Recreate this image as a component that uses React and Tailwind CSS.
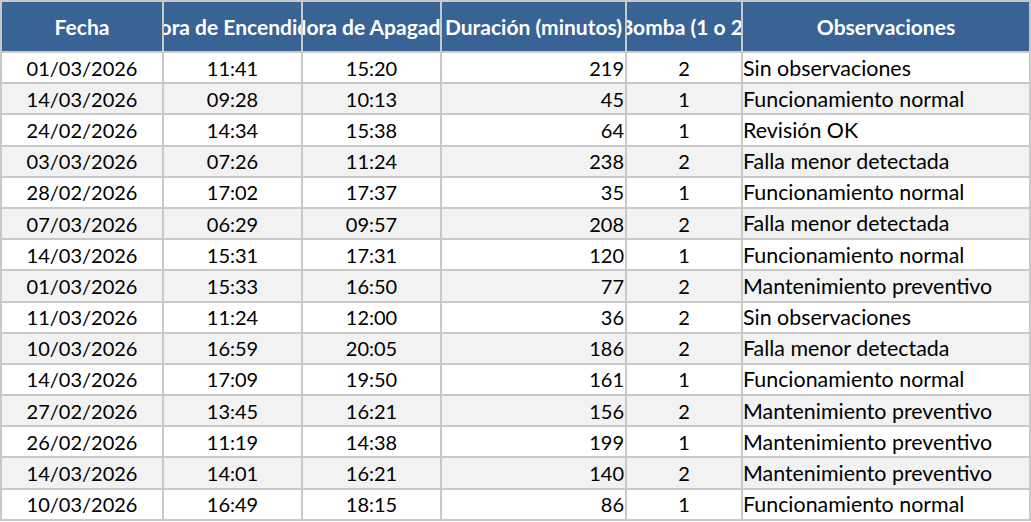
const headers = [
  'Fecha',
  'Hora de Encendido',
  'Hora de Apagado',
  'Duración (minutos)',
  'Bomba (1 o 2)',
  'Observaciones',
]

const rows = [
  ['01/03/2026', '11:41', '15:20', '219', '2', 'Sin observaciones'],
  ['14/03/2026', '09:28', '10:13', '45', '1', 'Funcionamiento normal'],
  ['24/02/2026', '14:34', '15:38', '64', '1', 'Revisión OK'],
  ['03/03/2026', '07:26', '11:24', '238', '2', 'Falla menor detectada'],
  ['28/02/2026', '17:02', '17:37', '35', '1', 'Funcionamiento normal'],
  ['07/03/2026', '06:29', '09:57', '208', '2', 'Falla menor detectada'],
  ['14/03/2026', '15:31', '17:31', '120', '1', 'Funcionamiento normal'],
  ['01/03/2026', '15:33', '16:50', '77', '2', 'Mantenimiento preventivo'],
  ['11/03/2026', '11:24', '12:00', '36', '2', 'Sin observaciones'],
  ['10/03/2026', '16:59', '20:05', '186', '2', 'Falla menor detectada'],
  ['14/03/2026', '17:09', '19:50', '161', '1', 'Funcionamiento normal'],
  ['27/02/2026', '13:45', '16:21', '156', '2', 'Mantenimiento preventivo'],
  ['26/02/2026', '11:19', '14:38', '199', '1', 'Mantenimiento preventivo'],
  ['14/03/2026', '14:01', '16:21', '140', '2', 'Mantenimiento preventivo'],
  ['10/03/2026', '16:49', '18:15', '86', '1', 'Funcionamiento normal'],
]

// alignment per column, like the spreadsheet
const align = [
  'justify-center text-[20px]',
  'justify-center text-[20px]',
  'justify-center text-[20px]',
  'justify-end pr-[1px] text-[20px]',
  'justify-center text-[20px]',
  'justify-start text-[21.4px]',
]

export default function App() {
  return (
    <div className="w-[1031px] h-[522px] bg-white overflow-hidden" style={{ fontFamily: 'Lato, "Open Sans", sans-serif' }}>
      <div className="grid grid-cols-[160px_137px_137px_183px_114px_286px] grid-rows-[49px] auto-rows-[29.2px] gap-[2px] p-[2px] bg-[#c9c9c9] w-[1031px]">
        {headers.map(h => (
          <div
            key={h}
            className="bg-[#3a6395] text-white font-bold text-[21px] flex items-center justify-center overflow-hidden whitespace-nowrap"
          >
            {h}
          </div>
        ))}
        {rows.map((r, i) =>
          r.map((c, j) => (
            <div
              key={i + '-' + j}
              className={`${i % 2 === 1 ? 'bg-[#f2f2f2]' : 'bg-white'} text-black flex items-center overflow-hidden whitespace-nowrap ${align[j]}`}
            >
              {c}
            </div>
          ))
        )}
      </div>
    </div>
  )
}
